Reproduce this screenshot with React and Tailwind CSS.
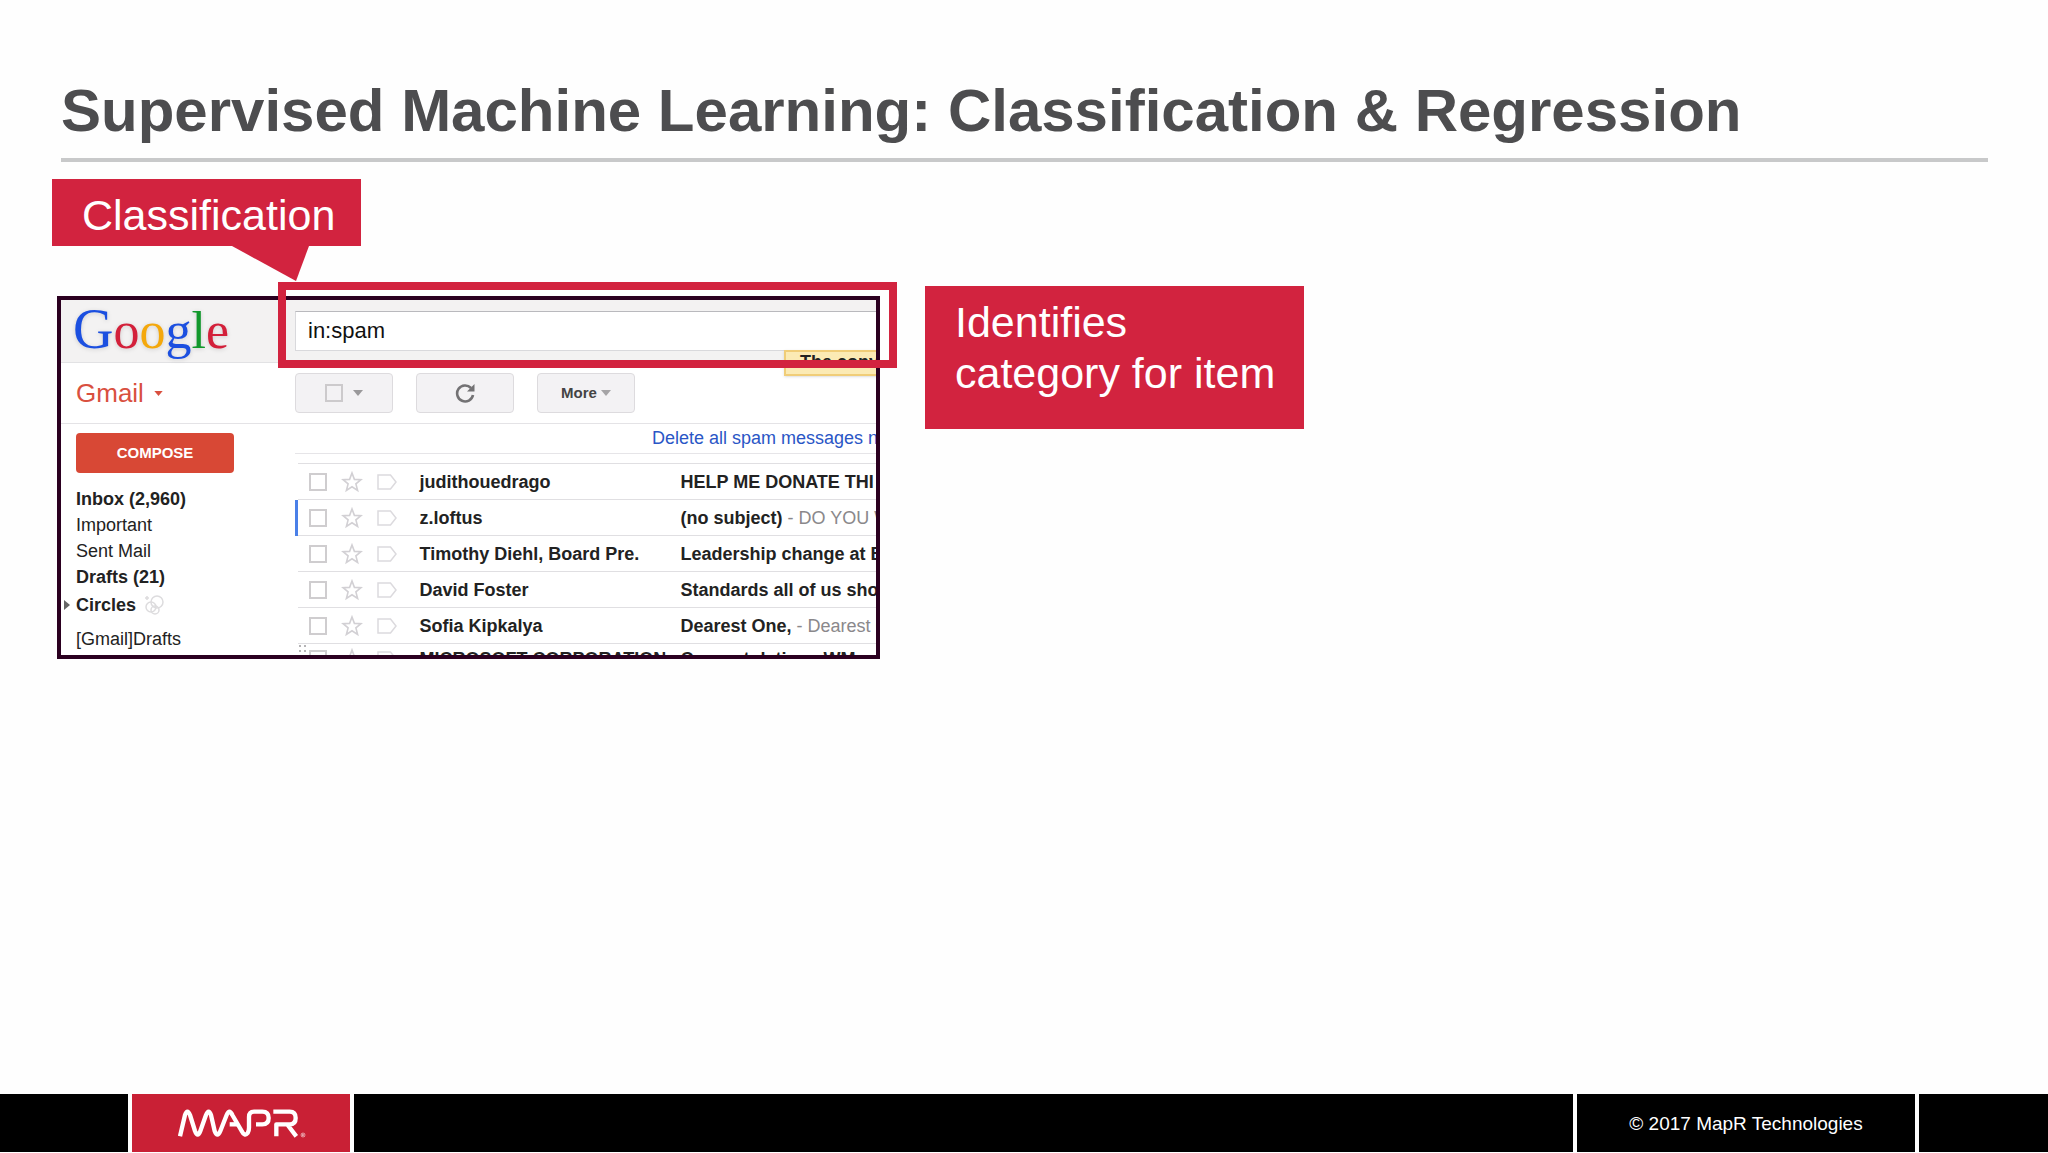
/* -------- MAIL DATA -------- */
const folders = [
  { id: 1, label: "Inbox (2,960)", bold: true },
  { id: 2, label: "Important", bold: false },
  { id: 3, label: "Sent Mail", bold: false },
  { id: 4, label: "Drafts (21)", bold: true },
];

const mails = [
  { id: 1, from: "judithouedrago", subject: "HELP ME DONATE THI" },
  { id: 2, from: "z.loftus", subject: "(no subject)", preview: "DO YOU W", active: true },
  { id: 3, from: "Timothy Diehl, Board Pre.", subject: "Leadership change at B" },
  { id: 4, from: "David Foster", subject: "Standards all of us sho" },
  { id: 5, from: "Sofia Kipkalya", subject: "Dearest One,", preview: "Dearest O" },
  { id: 6, from: "MICROSOFT CORPORATION", subject: "Congratulations WM" },
];

function Caret({ className }) {
  return (
    <svg viewBox="0 0 10 6" className={className} fill="currentColor">
      <path d="M0 0h10L5 6z" />
    </svg>
  );
}

function GoogleLogo() {
  return (
    <div className="w-[234px] shrink-0 pb-0.5 pl-3 font-['Liberation_Serif',serif] text-[52px] leading-[52px] drop-shadow-sm">
      <span className="text-[56px] text-[#1b4fe0]">G</span>
      <span className="text-[#d3203a]">o</span>
      <span className="text-[#f4a80c]">o</span>
      <span className="text-[#1b4fe0]">g</span>
      <span className="text-[#12982c]">l</span>
      <span className="text-[#d3203a]">e</span>
    </div>
  );
}

function MailRow({ mail }) {
  return (
    <tr className="h-9 border-t border-[#e0dfe2] last:[&>td]:pb-1.5">
      <td className={`w-[123px] border-l-[3px] p-0 ${mail.active ? "border-l-[#4a80e8]" : "border-l-transparent"}`}>
        <div className="flex items-center pl-[11px]">
          <input
            type="checkbox"
            aria-label={`Select mail from ${mail.from}`}
            className="size-[18px] shrink-0 appearance-none border-2 border-[#cfcdcf]"
          />
          <svg viewBox="0 0 22 22" className="ml-[14px] size-[22px] shrink-0" fill="none" stroke="#d2d0d4" strokeWidth="1.6">
            <path d="M11 2l2.4 6.4 6.6.3-5.1 4.2 1.7 6.6-5.6-3.7-5.6 3.7 1.7-6.6L2 8.7l6.6-.3z" />
          </svg>
          <svg viewBox="0 0 20 16" className="ml-[14px] h-4 w-5 shrink-0" fill="none" stroke="#dcdade" strokeWidth="1.5">
            <path d="M1 1h12.500l5.500 7-5.500 7H1z" />
          </svg>
        </div>
      </td>
      <td className="w-[261px] p-0 font-bold">{mail.from}</td>
      <td className="p-0 font-bold">
        {mail.subject}
        {mail.preview && <span className="font-normal text-[#8a888b]"> - {mail.preview}</span>}
      </td>
    </tr>
  );
}

function Gmail() {
  return (
    <div className="h-[363px] w-[823px] overflow-hidden border-4 border-[#2b0020] bg-white text-lg leading-[26px] text-[#222]">

      {/* SEARCH BAR */}
      <div className="flex h-[63px] items-center border-b border-[#e2e2e4] bg-[#f3f2f2]">
        <GoogleLogo />
        <input
          type="text"
          aria-label="Search mail"
          defaultValue="in:spam"
          className="h-10 flex-1 border border-r-0 border-[#d9d9dc] border-t-[#b9b9bd] bg-white px-3 text-[22px] text-[#111] outline-none"
        />
      </div>

      {/* TOOLBAR */}
      <div className="relative flex h-[61px] items-center border-b border-[#e4e3e6]">
        <button className="flex w-[234px] items-center gap-[10px] pl-[15px] text-[26px] text-[#d9503f]">
          Gmail
          <Caret className="h-[5px] w-[9px]" />
        </button>
        <div className="flex gap-[23px]">
          <button aria-label="Select" className="flex h-10 w-[98px] items-center justify-center gap-[10px] rounded-sm border border-[#dddbde] bg-[#f3f2f4] text-[#9a999b]">
            <span className="size-[18px] border-2 border-[#cccacc]" />
            <Caret className="h-[6px] w-[10px]" />
          </button>
          <button aria-label="Refresh" className="flex h-10 w-[98px] items-center justify-center rounded-sm border border-[#dddbde] bg-[#f3f2f4]">
            <svg viewBox="0 0 20 20" className="size-5" fill="none" stroke="#737274" strokeWidth="2.6">
              <path d="M16 5A8 8 0 1 0 18 12" />
              <path d="M19.500 1v7.500H12z" fill="#737274" stroke="none" />
            </svg>
          </button>
          <button className="flex h-10 w-[98px] items-center justify-center gap-1 rounded-sm border border-[#dddbde] bg-[#f3f2f4] text-[15px] font-bold text-[#444]">
            More
            <Caret className="h-[6px] w-[10px] text-[#a5a4a6]" />
          </button>
        </div>
        <div className="absolute -top-[13px] left-[723px] h-[26px] w-[120px] border-2 border-[#f0cd78] bg-[#fbeab4] pl-[14px] leading-[20px] font-bold whitespace-nowrap shadow">
          The conv
        </div>
      </div>

      <div className="flex">

        {/* FOLDERS */}
        <nav className="w-[234px] shrink-0 pt-[9px] pl-[15px]">
          <button className="mb-[13px] block h-10 w-[158px] rounded-sm bg-[#d84835] text-[15px] font-bold text-white">
            COMPOSE
          </button>
          {folders.map((f) => (
            <a key={f.id} href="#" className={`block ${f.bold ? "font-bold" : ""}`}>
              {f.label}
            </a>
          ))}
          <a href="#" className="-ml-3 flex h-[30px] items-center font-bold">
            <svg viewBox="0 0 6 10" className="mr-[6px] h-[10px] w-[6px]" fill="#666">
              <path d="M0 0l6 5-6 5z" />
            </svg>
            Circles
            <svg viewBox="0 0 20 20" className="ml-2 size-5" fill="none" stroke="#dddcde" strokeWidth="1.5">
              <circle cx="13" cy="7" r="6" />
              <circle cx="7" cy="12" r="5" />
              <circle cx="11" cy="15" r="4" />
              <path d="M1 3h4M3 1v4" />
            </svg>
          </a>
          <a href="#" className="mt-[6px] block">[Gmail]Drafts</a>
        </nav>

        {/* MAIL LIST */}
        <div className="relative w-[581px] shrink-0">
          <div className="h-[30px] border-b border-[#e6e5e8] pl-[357px] leading-[28px] whitespace-nowrap">
            <a href="#" className="text-[#2a56c6]">Delete all spam messages n</a>
          </div>
          <table className="mt-[9px] w-[700px] table-fixed border-collapse whitespace-nowrap">
            <tbody>
              {mails.map((m) => (
                <MailRow key={m.id} mail={m} />
              ))}
            </tbody>
          </table>
          {/* drag handle */}
          <svg viewBox="0 0 8 8" className="absolute top-[221px] left-1 size-2" fill="#b5b4b6">
            <path d="M0 0h2v2H0zM5 0h2v2H5zM0 5h2v2H0zM5 5h2v2H5z" />
          </svg>
        </div>

      </div>
    </div>
  );
}

function MaprLogo() {
  return (
    <svg
      viewBox="230 80 390 99"
      className="h-[33px] w-[130px]"
      role="img"
      aria-label="MAPR"
      fill="none"
      stroke="white"
      strokeWidth="13"
      strokeLinejoin="round"
    >
      <path d="M239 168L254 104Q261 84 269 104L284 152Q292 174 300 152L317 104Q325 84 332 104L343 152Q351 174 360 152L379 104Q387 84 396 104L424 152Q433 170 442 158Q446 152 446 142V110Q446 94 461 94H486Q505 94 505 113Q505 132 486 132H467" />
      <path d="M388 132H412" />
      <path d="M519 94H568Q586 94 586 113Q586 132 568 132H528V168M562 134L588 168" />
      <circle cx="608" cy="164" r="6" strokeWidth="1.5" />
      <path d="M606 168v-7h3q2 2 0 4h-3m3 0l2 3" strokeWidth="1.5" />
    </svg>
  );
}

export default function Slide() {
  return (
    <div className="flex min-h-screen flex-col bg-[#fefefe] font-['Liberation_Sans',Arial,sans-serif]">

      {/* TITLE */}
      <header className="mr-[60px] ml-[61px] border-b-4 border-[#c8c9ca] pt-[76px] pb-3">
        <h1 className="text-[60px] leading-[70px] font-bold text-[#4d4d4f]">
          Supervised Machine Learning: Classification &amp; Regression
        </h1>
      </header>

      <main className="flex-1 pt-[17px] pl-[52px]">

        {/* CALLOUT */}
        <div className="relative h-[67px] w-[309px] bg-[#d2233f] pt-1 pl-[30px] text-[43px] leading-[64px] text-white">
          Classification
          <svg viewBox="0 0 77 36" className="absolute top-[66px] left-[180px] z-10 h-9 w-[77px]" fill="#d2233f">
            <path d="M0 0h77v1L64 36 0 1z" />
          </svg>
        </div>

        <div className="mt-10 flex items-start gap-[45px] pl-[5px]">
          <div className="relative mt-[10px] shrink-0">
            <Gmail />
            {/* search highlight */}
            <div className="pointer-events-none absolute -top-[14px] left-[221px] h-[86px] w-[619px] border-8 border-[#d2233f]" />
          </div>

          <p className="h-[143px] w-[379px] shrink-0 bg-[#d2233f] pt-[11px] pl-[30px] text-[43px] leading-[51px] text-white">
            Identifies
            <br />
            category for item
          </p>
        </div>
      </main>

      {/* FOOTER */}
      <footer className="flex h-[59px] gap-1 pb-px text-[19px] text-white">
        <div className="w-32 bg-black" />
        <div className="flex w-[218px] items-center bg-[#c92035] pl-[45px]">
          <MaprLogo />
        </div>
        <div className="flex-1 bg-black" />
        <div className="flex w-[338px] items-center justify-center bg-black pt-0.5">
          © 2017 MapR Technologies
        </div>
        <div className="w-[129px] bg-black" />
      </footer>
    </div>
  );
}
